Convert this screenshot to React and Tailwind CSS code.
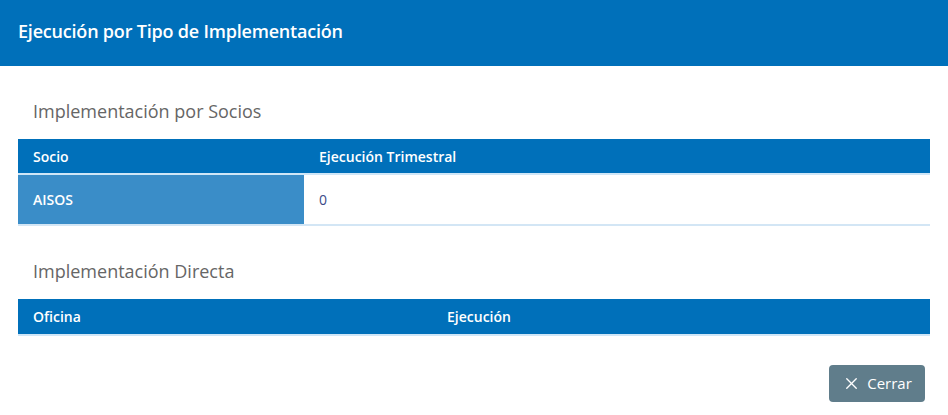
import { X } from 'lucide-react';

export default function App() {
  return (
    <div className="w-[948px] h-[415px] bg-white overflow-hidden" style={{ fontFamily: '"Open Sans", "Noto Sans", sans-serif' }}>
      {/* Header */}
      <div className="h-[66px] bg-[#0070ba] flex items-center px-[18px]">
        <h1 className="text-white text-[18px] font-semibold tracking-[-0.2px] -mt-[4px]">Ejecución por Tipo de Implementación</h1>
      </div>

      <div className="px-[18px] pt-[31px]">
        {/* Socios */}
        <h2 className="pl-[15px] text-[#666] text-[18px] leading-[28px]">Implementación por Socios</h2>
        <table className="w-full mt-[14px] border-collapse text-[14px]">
          <thead>
            <tr className="bg-[#0070ba] text-white h-[35px] border-b-2 border-[#cfe6f7]">
              <th className="w-[286px] text-left font-semibold pl-[15px]">Socio</th>
              <th className="text-left font-semibold pl-[15px]">Ejecución Trimestral</th>
            </tr>
          </thead>
          <tbody>
            <tr className="h-[51px] border-b-2 border-[#d3e6f5]">
              <td className="bg-[#3a8dc8] text-white font-semibold pl-[15px]">AISOS</td>
              <td className="text-[#3b4a87] pl-[15px]">0</td>
            </tr>
          </tbody>
        </table>

        {/* Directa */}
        <h2 className="mt-[31px] pl-[15px] text-[#666] text-[18px] leading-[28px]">Implementación Directa</h2>
        <table className="w-full mt-[14px] border-collapse text-[14px]">
          <thead>
            <tr className="bg-[#0070ba] text-white h-[36px] border-b-2 border-[#cfe6f7]">
              <th className="w-[414px] text-left font-semibold pl-[15px]">Oficina</th>
              <th className="text-left font-semibold pl-[15px]">Ejecución</th>
            </tr>
          </thead>
        </table>

        <div className="flex justify-end mt-[29px] pr-[5px]">
          <button className="h-[37px] w-[96px] rounded-[4px] bg-[#607d8b] text-white text-[15px] flex items-center justify-center gap-[6px]">
            <X size={19} strokeWidth={1.7} />
            Cerrar
          </button>
        </div>
      </div>
    </div>
  );
}
